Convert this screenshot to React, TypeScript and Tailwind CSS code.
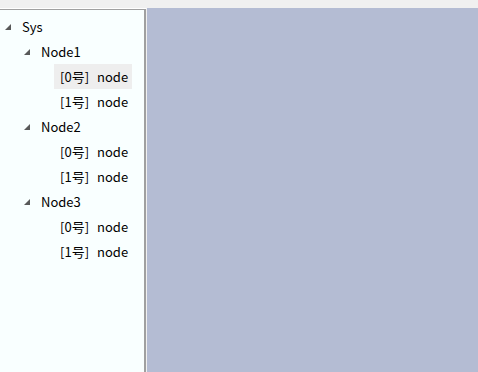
const tri = (
  <svg width="6" height="6" viewBox="0 0 6 6" className="block">
    <path d="M6 0 L6 6 L0 6 Z" fill="#595959" />
  </svg>
);

function Leaf({ n, sel }: { n: number; sel?: boolean }) {
  return (
    <div className="h-[25px] flex items-center pl-[54px]">
      <div className={`h-[25px] w-[78px] flex items-center pl-[6px] ${sel ? 'bg-[#eeeeee]' : ''}`}>
        <span>[{n}号]</span>
        <span className="ml-[8px]">node</span>
      </div>
    </div>
  );
}

function Group({ name }: { name: string }) {
  return (
    <div className="h-[25px] flex items-center">
      <div className="w-[41px] flex justify-start pl-[24px]">{tri}</div>
      <span>{name}</span>
    </div>
  );
}

export default function App() {
  return (
    <div className="w-[478px] h-[372px] flex flex-col bg-[#f0f0f0] text-[13px] text-[#000]" style={{ fontFamily: '"Noto Sans CJK SC", "Noto Sans", sans-serif' }}>
      <div className="h-[8px] shrink-0"></div>
      <div className="flex flex-1 min-h-0">
        <div className="w-[147px] border-t border-white border-r border-r-[#f0f0f0] flex">
          <div className="flex-1 border-t border-r-2 border-[#a0a0a0] bg-[#f9ffff] pt-[4px]">
            <div className="h-[25px] flex items-center">
              <div className="w-[22px] pl-[5px]">{tri}</div>
              <span>Sys</span>
            </div>
            <Group name="Node1" />
            <Leaf n={0} sel />
            <Leaf n={1} />
            <Group name="Node2" />
            <Leaf n={0} />
            <Leaf n={1} />
            <Group name="Node3" />
            <Leaf n={0} />
            <Leaf n={1} />
          </div>
        </div>
        <div className="flex-1 bg-[#b4bcd3]"></div>
      </div>
    </div>
  );
}
